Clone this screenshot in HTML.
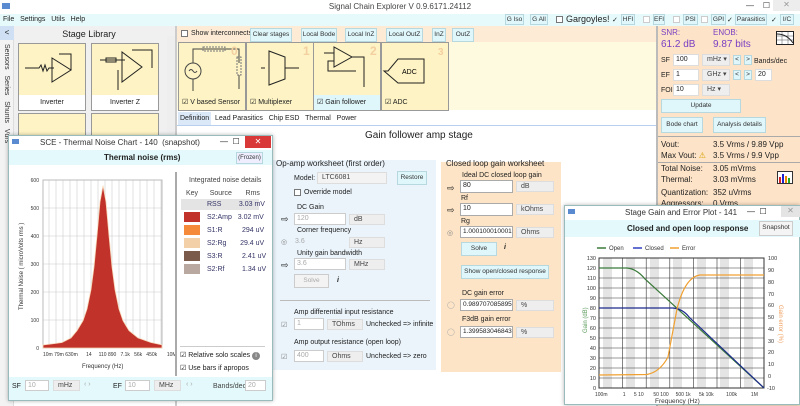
<!DOCTYPE html>
<html><head><meta charset="utf-8"><style>
*{box-sizing:border-box;margin:0;padding:0}
body{width:800px;height:405px;overflow:hidden;position:relative;background:#fff;font-family:"Liberation Sans",sans-serif;font-size:7px;color:#222}
.a{position:absolute;white-space:nowrap}
.btn{position:absolute;background:#dff6fa;border:1px solid #b8d8e0;font-size:6.5px;text-align:center;line-height:12px;color:#333;white-space:nowrap;overflow:hidden}
.inp{position:absolute;background:#fff;border:1px solid #aaa;font-size:7px;line-height:10px;padding-left:2px;white-space:nowrap;overflow:hidden}
.dis{color:#aaa;border-color:#ccc}
.sel{position:absolute;background:#eee;border:1px solid #ddd;font-size:7px;line-height:10px;padding-left:4px;color:#444;white-space:nowrap}
.cb{position:absolute;width:7px;height:7px;border:1px solid #777;background:#fff;font-size:7px;line-height:6px;text-align:center}
.tile{position:absolute;background:#fdf3c4;border:1px solid #999}
.tile .lb{position:absolute;left:0;right:0;bottom:0;height:15px;background:#fff;font-size:7px;line-height:15px;padding-left:3px;white-space:nowrap}
.pur{color:#7b3fc4;font-size:10px}
</style></head><body>
<div class="a" style="left:0;top:0;width:800px;height:14px;background:#fff"></div>
<div class="a" style="left:2px;top:3px;width:8px;height:6px;background:#5a8ad0"></div>
<div class="a" style="left:0;top:2px;width:800px;text-align:center;font-size:8px;color:#444">Signal Chain Explorer V 0.9.6171.24112</div>
<div class="a" style="left:746px;top:1px;font-size:8px;color:#333">—&nbsp;&nbsp;&nbsp;&nbsp;☐</div>
<div class="a" style="left:773px;top:0;width:27px;height:11px;background:#ededed;text-align:center;font-size:8px;color:#999">✕</div>
<div class="a" style="left:0;top:14px;width:800px;height:12px;background:#e6fafb"></div>
<div class="a" style="left:3px;top:16px;font-size:7px">File&nbsp;&nbsp; Settings&nbsp;&nbsp; Utils&nbsp;&nbsp; Help</div>
<div class="btn" style="left:505px;top:14px;width:19px;height:11px;line-height:9px">G Iso</div>
<div class="btn" style="left:530px;top:14px;width:18px;height:11px;line-height:9px">G All</div>
<div class="cb" style="left:556px;top:16px"></div>
<div class="a" style="left:566px;top:14px;font-size:9px">Gargoyles!</div>
<div class="a" style="left:612px;top:16px;font-size:7px">✓</div><div class="btn" style="left:621px;top:14px;width:14px;height:11px;line-height:9px">HFI</div>
<div class="cb" style="left:643px;top:16px;border-color:#ccc"></div><div class="btn" style="left:653px;top:14px;width:12px;height:11px;line-height:9px">EFI</div>
<div class="cb" style="left:673px;top:16px;border-color:#ccc"></div><div class="btn" style="left:683px;top:14px;width:15px;height:11px;line-height:9px">PSI</div>
<div class="cb" style="left:701px;top:16px;border-color:#ccc"></div><div class="btn" style="left:711px;top:14px;width:15px;height:11px;line-height:9px">GPI</div>
<div class="a" style="left:727px;top:16px;font-size:7px">✓</div><div class="btn" style="left:735px;top:14px;width:32px;height:11px;line-height:9px">Parasitics</div>
<div class="a" style="left:771px;top:16px;font-size:7px">✓</div><div class="btn" style="left:780px;top:14px;width:14px;height:11px;line-height:9px">I/C</div>
<div class="a" style="left:0;top:26px;width:14px;height:380px;background:#f3f3f3;border-right:1px solid #ddd"></div>
<div class="a" style="left:0;top:26px;width:14px;height:14px;background:#cfe0f5;text-align:center;font-size:8px;line-height:14px">&lt;</div>
<div class="a" style="left:2px;top:44px;writing-mode:vertical-rl;font-size:7px;color:#333;line-height:9px">Sensors&nbsp;&nbsp; Series&nbsp;&nbsp; Shunts&nbsp;&nbsp; Vdrs</div>
<div class="a" style="left:14px;top:26px;width:161px;height:110px;background:#f0f0f0"></div>
<div class="a" style="left:14px;top:29px;width:150px;text-align:center;font-size:9px">Stage Library</div>
<div class="tile" style="left:18px;top:43px;width:68px;height:68px"><div class="lb" style="text-align:center;padding:0">Inverter</div>
<svg class="a" style="left:0;top:0" width="68" height="52"><path d="M6 24h14l2-3 2 6 2-6 2 6 2-3h5M33 14v24l19-12z" fill="none" stroke="#222"/><path d="M40 10h12v16" fill="none" stroke="#222"/></svg></div>
<div class="tile" style="left:91px;top:43px;width:68px;height:68px"><div class="lb" style="text-align:center;padding:0">Inverter Z</div>
<svg class="a" style="left:0;top:0" width="68" height="52"><path d="M8 16h25M30 8v30l20-15z M40 6h20v18M26 26v20" fill="none" stroke="#222"/><rect x="14" y="14" width="10" height="4" fill="none" stroke="#222"/></svg></div>
<div class="tile" style="left:18px;top:113px;width:68px;height:25px"></div>
<div class="tile" style="left:91px;top:113px;width:68px;height:25px"></div>
<div class="a" style="left:167px;top:36px;width:8px;height:100px;background:#eee"></div>
<div class="a" style="left:175px;top:26px;width:2px;height:380px;background:#ccc"></div>
<div class="a" style="left:177px;top:26px;width:479px;height:16px;background:#fdebd6"></div>
<div class="cb" style="left:181px;top:30px"></div>
<div class="a" style="left:191px;top:30px">Show interconnects</div>
<div class="btn" style="left:250px;top:28px;width:42px">Clear stages</div>
<div class="btn" style="left:301px;top:28px;width:36px">Local Bode</div>
<div class="btn" style="left:345px;top:28px;width:32px">Local InZ</div>
<div class="btn" style="left:386px;top:28px;width:37px">Local OutZ</div>
<div class="btn" style="left:432px;top:28px;width:14px">InZ</div>
<div class="btn" style="left:452px;top:28px;width:22px">OutZ</div>
<div class="a" style="left:177px;top:42px;width:479px;height:68px;background:#fefae0"></div>
<div class="tile" style="left:178px;top:42px;width:68px;height:69px"><div class="lb" style="background:#fdf3c4">☑ V based Sensor</div>
<svg class="a" style="left:0;top:0" width="68" height="54"><circle cx="14" cy="28" r="8" fill="none" stroke="#444"/><path d="M10 28q2-3 4 0t4 0M14 20V6h46v14M14 36v12M60 32v14" fill="none" stroke="#444"/><rect x="24" y="4" width="22" height="4" fill="none" stroke="#777" stroke-dasharray="2 1"/><rect x="58" y="14" width="4" height="18" fill="none" stroke="#777" stroke-dasharray="2 1"/><text x="52" y="12" font-size="12" fill="#f4cfa0" font-weight="bold">0</text></svg></div>
<div class="tile" style="left:246px;top:42px;width:68px;height:69px"><div class="lb" style="background:#fdf3c4">☑ Multiplexer</div>
<svg class="a" style="left:0;top:0" width="68" height="54"><path d="M22 8l16 6v22l-16 6z M38 25h14M14 25h4" fill="none" stroke="#222"/><text x="56" y="12" font-size="12" fill="#f4cfa0" font-weight="bold">1</text></svg></div>
<div class="tile" style="left:313px;top:42px;width:68px;height:69px"><div class="lb" style="background:#dff6fa">☑ Gain follower</div>
<svg class="a" style="left:0;top:0" width="68" height="54"><path d="M10 10h10M20 4v20l18-10z M38 14h12v30M20 18h-6v10h28" fill="none" stroke="#222"/><text x="56" y="12" font-size="12" fill="#f4cfa0" font-weight="bold">2</text></svg></div>
<div class="tile" style="left:381px;top:42px;width:68px;height:69px"><div class="lb" style="background:#fdf3c4">☑ ADC</div>
<svg class="a" style="left:0;top:0" width="68" height="54"><path d="M2 28h4l10-12h26v24H16z" fill="none" stroke="#222"/><text x="20" y="31" font-size="7">ADC</text><text x="56" y="12" font-size="10" fill="#f4cfa0" font-weight="bold">3</text></svg></div>
<div class="a" style="left:177px;top:111px;width:479px;height:15px;background:#fff;border-bottom:1px solid #b8cff0"></div>
<div class="a" style="left:178px;top:112px;width:33px;height:13px;background:#dbe8f7"></div>
<div class="a" style="left:180px;top:115px">Definition&nbsp;&nbsp; Lead Parasitics&nbsp;&nbsp; Chip ESD&nbsp;&nbsp; Thermal&nbsp;&nbsp; Power</div>
<div class="a" style="left:365px;top:130px;font-size:10px">Gain follower amp stage</div>
<div class="a" style="left:273px;top:160px;width:163px;height:210px;background:#ebf4fb"></div>
<div class="a" style="left:276px;top:159px;font-size:8px">Op-amp worksheet (first order)</div>
<div class="a" style="left:294px;top:175px">Model:</div><div class="sel" style="left:317px;top:172px;width:70px;height:12px;background:#f3f3f3">LTC6081</div>
<div class="btn" style="left:397px;top:171px;width:30px;height:14px">Restore</div>
<div class="cb" style="left:294px;top:189px"></div><div class="a" style="left:304px;top:189px">Override model</div>
<div class="a" style="left:297px;top:204px">DC Gain</div>
<div class="a" style="left:281px;top:214px;font-size:9px">⇨</div><div class="inp dis" style="left:294px;top:213px;width:52px;height:12px">120</div><div class="sel" style="left:349px;top:214px;width:36px;height:11px">dB</div>
<div class="a" style="left:297px;top:227px">Corner frequency</div>
<div class="a" style="left:281px;top:238px;color:#888">◎</div><div class="a" style="left:295px;top:238px;color:#aaa">3.6</div><div class="sel" style="left:349px;top:237px;width:36px;height:11px">Hz</div>
<div class="a" style="left:297px;top:250px">Unity gain bandwidth</div>
<div class="a" style="left:281px;top:260px;font-size:9px">⇨</div><div class="inp dis" style="left:294px;top:258px;width:52px;height:12px">3.6</div><div class="sel" style="left:349px;top:259px;width:36px;height:11px">MHz</div>
<div class="btn" style="left:294px;top:274px;width:35px;height:14px;color:#aaa;background:#f3f3f3;border-color:#ccc">Solve</div><div class="a" style="left:337px;top:277px;font-weight:bold;font-style:italic">i</div>
<div class="a" style="left:280px;top:300px;width:150px;height:1px;background:#bbb"></div>
<div class="a" style="left:294px;top:309px">Amp differential input resistance</div>
<div class="a" style="left:281px;top:321px;color:#888">☑</div><div class="inp dis" style="left:294px;top:318px;width:30px;height:12px">1</div><div class="sel" style="left:327px;top:319px;width:36px;height:11px">TOhms</div><div class="a" style="left:366px;top:321px">Unchecked =&gt; infinite</div>
<div class="a" style="left:294px;top:339px">Amp output resistance (open loop)</div>
<div class="a" style="left:281px;top:353px;color:#888">☑</div><div class="inp dis" style="left:294px;top:350px;width:30px;height:12px">400</div><div class="sel" style="left:327px;top:351px;width:36px;height:11px">Ohms</div><div class="a" style="left:366px;top:353px">Unchecked =&gt; zero</div>
<div class="a" style="left:441px;top:162px;width:120px;height:210px;background:#fde4c6"></div>
<div class="a" style="left:446px;top:159px;font-size:8px">Closed loop gain worksheet</div>
<div class="a" style="left:462px;top:172px">Ideal DC closed loop gain</div>
<div class="a" style="left:447px;top:183px;font-size:9px">⇨</div><div class="inp" style="left:460px;top:180px;width:53px;height:13px">80</div><div class="sel" style="left:516px;top:181px;width:38px;height:11px">dB</div>
<div class="a" style="left:461px;top:195px">Rf</div>
<div class="a" style="left:447px;top:205px;font-size:9px">⇨</div><div class="inp" style="left:460px;top:203px;width:53px;height:13px">10</div><div class="sel" style="left:516px;top:204px;width:38px;height:11px">kOhms</div>
<div class="a" style="left:461px;top:218px">Rg</div>
<div class="a" style="left:447px;top:229px;color:#888">◎</div><div class="inp" style="left:460px;top:226px;width:53px;height:12px;font-size:6.5px">1.000100010001</div><div class="sel" style="left:516px;top:227px;width:38px;height:11px">Ohms</div>
<div class="btn" style="left:461px;top:242px;width:36px;height:14px">Solve</div><div class="a" style="left:504px;top:244px;font-weight:bold;font-style:italic">i</div>
<div class="btn" style="left:461px;top:265px;width:88px;height:14px">Show open/closed response</div>
<div class="a" style="left:462px;top:290px">DC gain error</div>
<div class="a" style="left:447px;top:301px;color:#aaa">◯</div><div class="inp" style="left:460px;top:299px;width:53px;height:12px;font-size:6.5px">0.98970708589500</div><div class="sel" style="left:516px;top:300px;width:38px;height:11px">%</div>
<div class="a" style="left:462px;top:316px">F3dB gain error</div>
<div class="a" style="left:447px;top:328px;color:#aaa">◯</div><div class="inp" style="left:460px;top:326px;width:53px;height:12px;font-size:6.5px">1.39958304684327</div><div class="sel" style="left:516px;top:327px;width:38px;height:11px">%</div>
<div class="a" style="left:656px;top:26px;width:2px;height:380px;background:#bbb"></div>
<div class="a" style="left:658px;top:26px;width:142px;height:380px;background:#fde3c7"></div>
<div class="a pur" style="left:661px;top:28px;font-size:8px">SNR:</div><div class="a pur" style="left:713px;top:28px;font-size:8px">ENOB:</div>
<div class="a pur" style="left:661px;top:39px">61.2 dB</div><div class="a pur" style="left:713px;top:39px">9.87 bits</div>
<svg class="a" style="left:776px;top:31px" width="18" height="14"><rect x="0.5" y="0.5" width="17" height="13" fill="#fff" stroke="#222"/><path d="M1 5h16M1 9h16M6 1v12M12 1v12" stroke="#555" stroke-width=".5"/><path d="M1 3q10 0 16 9" fill="none" stroke="#222"/></svg>
<div class="a" style="left:661px;top:57px">SF</div><div class="inp" style="left:673px;top:54px;width:26px;height:12px;border-color:#ddd">100</div><div class="sel" style="left:702px;top:54px;width:28px;height:12px">mHz ▾</div><div class="btn" style="left:733px;top:55px;width:8px;height:10px;line-height:8px">&lt;</div><div class="btn" style="left:744px;top:55px;width:8px;height:10px;line-height:8px">&gt;</div><div class="a" style="left:754px;top:58px">Bands/dec</div>
<div class="a" style="left:661px;top:72px">EF</div><div class="inp" style="left:673px;top:69px;width:26px;height:12px;border-color:#ddd">1</div><div class="sel" style="left:702px;top:69px;width:28px;height:12px">GHz ▾</div><div class="btn" style="left:733px;top:70px;width:8px;height:10px;line-height:8px">&lt;</div><div class="btn" style="left:744px;top:70px;width:8px;height:10px;line-height:8px">&gt;</div><div class="inp" style="left:755px;top:69px;width:17px;height:12px;border-color:#ddd">20</div>
<div class="a" style="left:661px;top:87px">FOI</div><div class="inp" style="left:673px;top:84px;width:26px;height:12px;border-color:#ddd">10</div><div class="sel" style="left:702px;top:84px;width:28px;height:12px">Hz ▾</div>
<div class="btn" style="left:661px;top:99px;width:80px;height:14px">Update</div>
<div class="btn" style="left:661px;top:117px;width:42px;height:16px;line-height:14px">Bode chart</div>
<div class="btn" style="left:713px;top:117px;width:53px;height:16px;line-height:14px">Analysis details</div>
<div class="a" style="left:658px;top:136px;width:142px;height:1px;background:#aaa"></div>
<div class="a" style="left:661px;top:139px;font-size:8px;line-height:11px">Vout:<br>Max Vout: <span style="color:#d8a000">⚠</span></div>
<div class="a" style="left:713px;top:139px;font-size:8px;line-height:11px">3.5 Vrms / 9.89 Vpp<br>3.5 Vrms / 9.9 Vpp</div>
<div class="a" style="left:658px;top:162px;width:142px;height:1px;background:#aaa"></div>
<div class="a" style="left:661px;top:164px;font-size:8px">Total Noise:</div><div class="a" style="left:713px;top:164px;font-size:8px">3.05 mVrms</div>
<div class="a" style="left:661px;top:175px;font-size:8px">Thermal:</div><div class="a" style="left:713px;top:175px;font-size:8px">3.03 mVrms</div>
<div class="a" style="left:661px;top:188px;font-size:8px">Quantization:</div><div class="a" style="left:713px;top:188px;font-size:8px">352 uVrms</div>
<div class="a" style="left:661px;top:199px;font-size:8px">Aggressors:</div><div class="a" style="left:713px;top:199px;font-size:8px">0 Vrms</div>
<svg class="a" style="left:777px;top:171px" width="16" height="13"><rect x="0.5" y="0.5" width="15" height="12" fill="#fff" stroke="#333"/><rect x="2" y="6" width="2" height="6" fill="#d22"/><rect x="5" y="3" width="2" height="9" fill="#22c"/><rect x="8" y="5" width="2" height="7" fill="#e80"/><rect x="11" y="7" width="2" height="5" fill="#2a2"/></svg>
<div class="a" style="left:8px;top:135px;width:265px;height:266px;background:#fff;border:1px solid #9bb;box-shadow:0 0 4px rgba(0,0,0,.3)"></div>
<div class="a" style="left:12px;top:139px;width:7px;height:5px;background:#5a8ad0"></div>
<div class="a" style="left:40px;top:138px;font-size:8px;color:#333">SCE - Thermal Noise Chart - 140&nbsp; (snapshot)</div>
<div class="a" style="left:220px;top:137px;font-size:8px">—&nbsp;&nbsp;☐</div>
<div class="a" style="left:245px;top:136px;width:26px;height:12px;background:#d83838;color:#fff;text-align:center;font-size:8px;line-height:12px">✕</div>
<div class="a" style="left:9px;top:150px;width:263px;height:15px;background:#e3f9fb"></div>
<div class="a" style="left:104px;top:153px;font-size:8px;font-weight:bold">Thermal noise (rms)</div>
<div class="btn" style="left:236px;top:152px;width:27px;height:12px;line-height:10px;font-size:6px;background:#eef">(Frozen)</div>
<svg class="a" style="left:9px;top:165px" width="170" height="212">
<g stroke="#ccc" stroke-width=".6">
<path d="M40 15v168M47 15v168M54 15v168M61 15v168M68 15v168M75 15v168M82 15v168M89 15v168M96 15v168M103 15v168M110 15v168M117 15v168M124 15v168M131 15v168M138 15v168M145 15v168M152 15v168"/>
<path d="M34 155h119M34 127h119M34 99h119M34 71h119M34 43h119M34 15h119"/></g>
<rect x="34" y="15" width="119" height="168" fill="none" stroke="#bbb"/>
<path d="M34 180 L46 178.5 L53 177.5 L62 172.9 L68 165.6 L74 155.7 L78 144 L82 124.5 L85 101.8 L88 70.6 L91 36.8 L94 20.6 L97 36.8 L100 70.6 L103 101.8 L106 124.5 L110 144 L114 155.7 L120 165.6 L129 172.9 L142 177.5 L153 179.9 L153 183 L34 183Z" fill="#c0322a" stroke="#f8d8b8" stroke-width=".8"/>
<g font-size="5" fill="#333" text-anchor="end"><text x="30" y="185">0</text><text x="30" y="157">100</text><text x="30" y="129">200</text><text x="30" y="101">300</text><text x="30" y="73">400</text><text x="30" y="45">500</text><text x="30" y="17">600</text></g>
<text font-size="5" fill="#333" x="34" y="191">10m 79m 630m&#160;&#160;&#160;&#160;&#160; 14&#160;&#160;&#160;&#160; 110 890&#160;&#160; 7.1k&#160;&#160; 56k&#160;&#160; 450k&#160;&#160;&#160;&#160;&#160;&#160; 10M</text>
<text font-size="6" fill="#333" x="73" y="203">Frequency (Hz)</text>
<text font-size="6" fill="#333" transform="translate(14,145) rotate(-90)">Thermal Noise ( microVolts rms )</text>
</svg>
<div class="a" style="left:175px;top:172px;width:2px;height:204px;background:#aaa"></div>
<div class="a" style="left:189px;top:177px;color:#444">Integrated noise details</div>
<div class="a" style="left:186px;top:190px;color:#444">Key&nbsp;&nbsp;&nbsp;&nbsp;&nbsp; Source&nbsp;&nbsp;&nbsp;&nbsp;&nbsp;&nbsp; Rms</div>
<div class="a" style="left:181px;top:199px;width:78px;height:11px;background:#e4e4e4"></div>
<div class="a" style="left:207px;top:201px;color:#336">RSS&nbsp;&nbsp;&nbsp;&nbsp;&nbsp;&nbsp;&nbsp;&nbsp; 3.03 mV</div>
<div class="a" style="left:184px;top:212px;width:16px;height:10px;background:#c0322a"></div><div class="a" style="left:207px;top:214px;color:#336">S2:Amp&nbsp;&nbsp; 3.02 mV</div>
<div class="a" style="left:184px;top:225px;width:16px;height:10px;background:#f58a3a"></div><div class="a" style="left:207px;top:227px;color:#336">S1:R&nbsp;&nbsp;&nbsp;&nbsp;&nbsp;&nbsp;&nbsp;&nbsp;&nbsp; 294 uV</div>
<div class="a" style="left:184px;top:238px;width:16px;height:10px;background:#f4d0a8"></div><div class="a" style="left:207px;top:240px;color:#336">S2:Rg&nbsp;&nbsp;&nbsp;&nbsp;&nbsp;&nbsp; 29.4 uV</div>
<div class="a" style="left:184px;top:251px;width:16px;height:10px;background:#7a5a4a"></div><div class="a" style="left:207px;top:253px;color:#336">S3:R&nbsp;&nbsp;&nbsp;&nbsp;&nbsp;&nbsp;&nbsp;&nbsp;&nbsp; 2.41 uV</div>
<div class="a" style="left:184px;top:264px;width:16px;height:10px;background:#b8a8a0"></div><div class="a" style="left:207px;top:266px;color:#336">S2:Rf&nbsp;&nbsp;&nbsp;&nbsp;&nbsp;&nbsp;&nbsp;&nbsp; 1.34 uV</div>
<div class="a" style="left:180px;top:346px;width:85px;height:1px;background:#ccc"></div>
<div class="a" style="left:180px;top:351px">☑ Relative solo scales <span style="display:inline-block;width:8px;height:8px;border-radius:4px;background:#888;color:#fff;text-align:center;font-size:6px;line-height:8px">i</span></div>
<div class="a" style="left:180px;top:364px">☑ Use bars if apropos</div>
<div class="a" style="left:9px;top:377px;width:263px;height:23px;background:#e3f9fb"></div>
<div class="a" style="left:12px;top:383px">SF</div><div class="inp dis" style="left:25px;top:380px;width:24px;height:11px">10</div><div class="sel" style="left:53px;top:380px;width:27px;height:11px">mHz</div>
<div class="a" style="left:84px;top:381px;color:#aaa">‹ ›</div>
<div class="a" style="left:113px;top:383px">EF</div><div class="inp dis" style="left:125px;top:380px;width:25px;height:11px">10</div><div class="sel" style="left:154px;top:380px;width:27px;height:11px">MHz</div>
<div class="a" style="left:186px;top:381px;color:#aaa">‹ ›</div>
<div class="a" style="left:213px;top:383px;color:#444">Bands/dec</div><div class="inp dis" style="left:245px;top:380px;width:21px;height:11px">20</div>
<div class="a" style="left:564px;top:205px;width:236px;height:200px;background:#fff;border:1px solid #9bb;box-shadow:0 0 4px rgba(0,0,0,.3)"></div>
<div class="a" style="left:568px;top:209px;width:7px;height:5px;background:#5a8ad0"></div>
<div class="a" style="left:625px;top:208px;font-size:8px;color:#333">Stage Gain and Error Plot - 141</div>
<div class="a" style="left:747px;top:207px;font-size:8px">—&nbsp;&nbsp;☐</div>
<div class="a" style="left:781px;top:206px;width:19px;height:11px;background:#e4e4e4;color:#999;text-align:center;font-size:8px">✕</div>
<div class="a" style="left:565px;top:220px;width:235px;height:17px;background:#e3f9fb"></div>
<div class="a" style="left:627px;top:224px;font-size:8px;font-weight:bold">Closed and open loop response</div>
<div class="btn" style="left:759px;top:221px;width:34px;height:15px;background:#f4f4f4;border-color:#ccc">Snapshot</div>
<svg class="a" style="left:565px;top:237px" width="235" height="168">
<g font-size="6" fill="#333"><path d="M32 11h9" stroke="#3a7a3a" stroke-width="1.5"/><text x="44" y="13">Open</text><path d="M68 11h9" stroke="#3040c0" stroke-width="1.5"/><text x="80" y="13">Closed</text><path d="M105 11h9" stroke="#f0a030" stroke-width="1.5"/><text x="117" y="13">Error</text></g>
<g fill="#e4e4e4"><rect x="38" y="21" width="9" height="130"/><rect x="61" y="21" width="9" height="130"/><rect x="85" y="21" width="9" height="130"/><rect x="108" y="21" width="9" height="130"/><rect x="132" y="21" width="9" height="130"/><rect x="155" y="21" width="9" height="130"/><rect x="179" y="21" width="9" height="130"/></g>
<g stroke="#333" stroke-width=".6"><path d="M34 21h165M34 31h165M34 41h165M34 51h165M34 61h165M34 71h165M34 81h165M34 91h165M34 101h165M34 111h165M34 121h165M34 131h165M34 141h165M34 151h165"/><path d="M34 21v130M57.6 21v130M81.2 21v130M104.8 21v130M128.4 21v130M152 21v130M175.6 21v130M199 21v130"/></g>
<rect x="34" y="21" width="165" height="130" fill="none" stroke="#333"/>
<path d="M34 31 L62 31 Q72 32 80 42 L199 151" fill="none" stroke="#3a7a3a" stroke-width="1.2"/>
<path d="M34 71 L108 71 Q118 72 124 80 L199 151" fill="none" stroke="#1c2b8c" stroke-width="1.2"/>
<path d="M34 138 L82 137.5 Q95 135 103 120 L112 72 Q120 40 135 38 L199 38" fill="none" stroke="#f0a030" stroke-width="1.2"/>
<g font-size="5.5" fill="#333" text-anchor="end"><text x="31" y="153">0</text><text x="31" y="143">10</text><text x="31" y="133">20</text><text x="31" y="123">30</text><text x="31" y="113">40</text><text x="31" y="103">50</text><text x="31" y="93">60</text><text x="31" y="83">70</text><text x="31" y="73">80</text><text x="31" y="63">90</text><text x="31" y="53">100</text><text x="31" y="43">110</text><text x="31" y="33">120</text><text x="31" y="23">130</text></g>
<g font-size="5.5" fill="#333"><text x="202" y="153">-10</text><text x="203" y="141">0</text><text x="203" y="129">10</text><text x="203" y="117">20</text><text x="203" y="106">30</text><text x="203" y="94">40</text><text x="203" y="82">50</text><text x="203" y="70">60</text><text x="203" y="59">70</text><text x="203" y="47">80</text><text x="203" y="35">90</text><text x="203" y="23">100</text></g>
<text font-size="5" fill="#333" x="30" y="159">100m&#160;&#160;&#160;&#160;&#160;&#160;&#160;&#160;&#160;&#160; 1&#160;&#160;&#160;&#160;&#160; 5 10&#160;&#160;&#160;&#160;&#160;&#160; 50 100&#160;&#160;&#160;&#160; 500 1k&#160;&#160;&#160;&#160;&#160; 5k 10k&#160;&#160;&#160;&#160;&#160;&#160;&#160;&#160; 100k&#160;&#160;&#160;&#160;&#160;&#160;&#160;&#160;&#160; 1M</text>
<text font-size="6.5" fill="#333" x="90" y="166">Frequency (Hz)</text>
<text font-size="6" fill="#5a9a5a" transform="translate(22,96) rotate(-90)">Gain (dB)</text>
<text font-size="6" fill="#f0a060" transform="translate(214,68) rotate(90)">Gain error (%)</text>
</svg>
</body></html>
